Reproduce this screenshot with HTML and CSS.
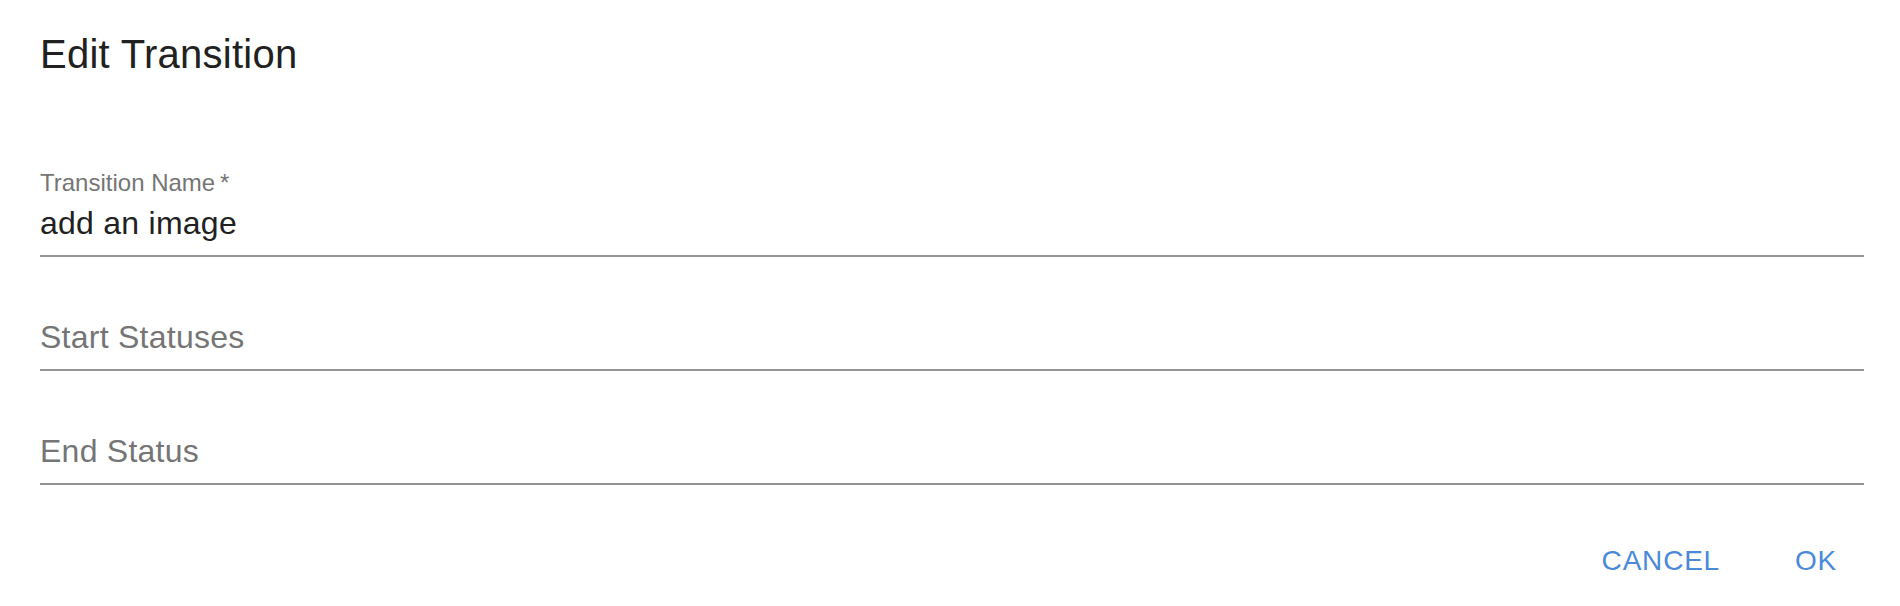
FILE: index.html
```html
<!DOCTYPE html>
<html lang="en">
<head>
    <meta charset="UTF-8">
    <meta name="viewport" content="width=device-width, initial-scale=1.0">
    <title>Edit Transition</title>
    <link rel="stylesheet" href="styles.css">
</head>
<body>
    <section class="dialog">
        <h2 class="dialog-title">Edit Transition</h2>
        <form class="dialog-content">
            <div class="field">
                <label class="field-label" for="name">Transition Name<span class="required">&thinsp;*</span></label>
                <input class="field-input" id="name" type="text" value="add an image">
            </div>
            <div class="field field-empty">
                <input class="field-input" type="text" placeholder="Start Statuses">
            </div>
            <div class="field field-empty">
                <input class="field-input" type="text" placeholder="End Status">
            </div>
        </form>
        <footer class="dialog-actions">
            <button class="btn" type="button">Cancel</button>
            <button class="btn" type="button">OK</button>
        </footer>
    </section>
</body>
</html>
```

FILE: styles.css
```css
html {
    box-sizing: border-box;
    font-family: "Liberation Sans", Arial, sans-serif;
    font-size: 16px;
}

*,
*:before,
*:after {
    box-sizing: inherit;
}

body {
    margin: 0;
    background-color: #fff;
    color: #212121;
}

.dialog {
    display: flex;
    flex-direction: column;
}

.dialog-title {
    margin: 0;
    padding: 22px 36px 0 40px;
    font-size: 40px;
    font-weight: 400;
    line-height: 64px;
    letter-spacing: .27px;
    color: #212121;
}

.dialog-content {
    display: flex;
    flex-direction: column;
    gap: 28px;
    padding: 85px 36px 0 40px;
}

.field {
    display: flex;
    flex-direction: column;
    padding-bottom: 12px;
    border-bottom: 2px solid #949494;
}

.field-empty {
    padding-top: 32px;
}

.field-label {
    height: 24px;
    margin-bottom: 8px;
    font-size: 24px;
    line-height: 24px;
    color: #757575;
}

.field-input {
    display: block;
    width: 100%;
    height: 40px;
    margin: 0;
    padding: 0;
    border: 0;
    outline: none;
    background: transparent;
    font-family: inherit;
    font-size: 32px;
    line-height: 40px;
    letter-spacing: .25px;
    color: #212121;
}

.field-input::placeholder {
    color: #757575;
    opacity: 1;
}

.dialog-actions {
    display: flex;
    justify-content: flex-end;
    gap: 16px;
    padding: 40px 20px 0 0;
}

.btn {
    min-width: 128px;
    height: 72px;
    padding: 0 16px;
    border: 0;
    background: transparent;
    font-family: inherit;
    font-size: 28px;
    line-height: 72px;
    letter-spacing: .8px;
    text-transform: uppercase;
    color: #4a8ad9;
    cursor: pointer;
}
```
